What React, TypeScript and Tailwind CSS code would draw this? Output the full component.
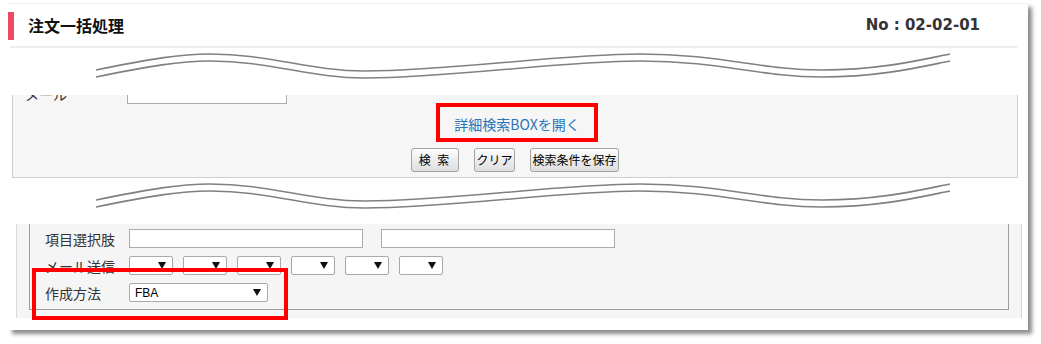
import React from 'react'

const jp = { fontFamily: '"Noto Sans CJK JP", "Noto Sans", sans-serif' }

// hand-drawn break line (two parallel strokes)
function Wave({ height }: { height: number }) {
  const d =
    'M96,22 C150,11 180,6 210,6 C270,6 310,23 365,23 C450,23 560,6 640,6 C720,6 760,22 822,22 C880,22 920,12 950,6'
  return (
    <svg width={1020} height={height} viewBox={`8 0 1020 ${height}`} className="block">
      <path d={d} fill="none" stroke="#808080" strokeWidth={1.6} />
      <path d={d} fill="none" stroke="#808080" strokeWidth={1.6} transform="translate(0 7)" />
    </svg>
  )
}

function Triangle() {
  return (
    <svg width="8" height="7" viewBox="0 0 8 7">
      <polygon points="0,0 8,0 4,7" fill="#111" />
    </svg>
  )
}

function FakeSelect({ width, value }: { width: number; value?: string }) {
  return (
    <div
      className="flex h-[19px] items-center justify-between rounded-[2px] border border-[#a9a9a9] bg-white pl-[5px] pr-[6px] text-[12px] text-black"
      style={{ width, fontFamily: '"Liberation Sans", Arial, sans-serif' }}
    >
      <span>{value ?? ''}</span>
      <Triangle />
    </div>
  )
}

function Btn({ label, width, wide }: { label: string; width: number; wide?: boolean }) {
  return (
    <button
      className={`flex h-[24px] items-center justify-center rounded-[3px] border border-[#a3a3a3] bg-gradient-to-b from-[#fdfdfd] to-[#dedede] text-[12px] leading-none text-black ${wide ? 'tracking-[2px]' : ''}`}
      style={{ width, ...jp }}
    >
      {label}
    </button>
  )
}

export default function App() {
  return (
    <div className="h-[344px] w-[1041px] overflow-hidden bg-white pl-[8px] pt-[3px]" style={jp}>
      <div className="relative h-[327px] w-[1020px] border-t border-[#f0f0f0] bg-white shadow-[4px_4px_4px_rgba(0,0,0,0.45)]">
        {/* header */}
        <div className="flex h-[42px] items-center justify-between pr-[48px]">
          <div className="flex items-center">
            <div className="mt-[2px] h-[28px] w-[6px] bg-[#ef4a64]" />
            <h1 className="ml-[14px] text-[16px] font-bold leading-none text-[#111]">注文一括処理</h1>
          </div>
          <div
            className="text-[15px] font-bold leading-none text-[#333]"
            style={{ fontFamily: '"DejaVu Sans", Verdana, sans-serif' }}
          >
            No : 02-02-01
          </div>
        </div>
        <div className="ml-[2px] h-[2px] w-[1007px] bg-[#ececec]" />

        <Wave height={47} />

        {/* search box (cut) */}
        <div className="ml-[4px] w-[1006px] overflow-hidden border-x border-b border-[#cfcfcf] bg-[#f6f6f6] pb-[5px]">
          <div className="-mt-[11px] flex h-[20px] items-center pl-[12px]">
            <span className="w-[102px] text-[14px] leading-none text-[#333]">メール</span>
            <div className="h-[20px] w-[160px] border border-[#ababab] bg-white" />
          </div>
          <div className="-mt-[1px] flex justify-center pl-[4px]">
            <div className="flex h-[39px] w-[162px] items-center justify-center border-[4px] border-[#ff0000] pt-[2px]">
              <a className="text-[14px] leading-none text-[#2a74b8]">詳細検索BOXを開く</a>
            </div>
          </div>
          <div className="mt-[6px] flex justify-center gap-[15px]">
            <Btn label="検 索" width={48} wide />
            <Btn label="クリア" width={41} />
            <Btn label="検索条件を保存" width={89} />
          </div>
        </div>

        <Wave height={46} />

        {/* detail box (cut) */}
        <div className="ml-[8px] w-[1006px] border-x border-x-[#d8d8d8] bg-[#f5f5f5] px-[12px] pb-[8px]">
          <div className="border-x border-b border-[#9c9c9c] pb-[3px] pl-[15px] pt-[1px]">
            <div className="flex h-[27px] items-center">
              <span className="w-[84px] text-[14px] leading-none text-[#333]">項目選択肢</span>
              <div className="h-[19px] w-[234px] border border-[#ababab] bg-white" />
              <div className="ml-[18px] h-[19px] w-[234px] border border-[#ababab] bg-white" />
            </div>
            <div className="flex h-[27px] items-center">
              <span className="w-[84px] text-[14px] leading-none text-[#333]">メール送信</span>
              <div className="flex gap-[10px]">
                {[0, 1, 2, 3, 4, 5].map((i) => (
                  <FakeSelect key={i} width={44} />
                ))}
              </div>
            </div>
            <div className="flex h-[27px] items-center">
              <span className="w-[84px] text-[14px] leading-none text-[#333]">作成方法</span>
              <FakeSelect width={139} value="FBA" />
            </div>
          </div>
        </div>

        {/* annotation */}
        <div className="absolute left-[24px] top-[264px] h-[52px] w-[256px] border-[4px] border-[#ff0000]" />
      </div>
    </div>
  )
}
